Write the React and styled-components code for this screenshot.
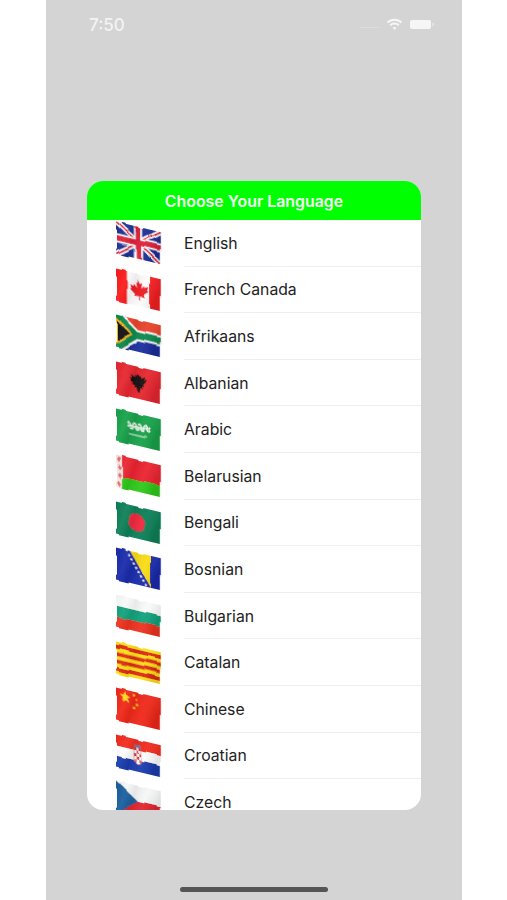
import styled, { createGlobalStyle } from "styled-components";

const GlobalStyle = createGlobalStyle`
  html, body {
    margin: 0;
    padding: 0;
    background: #ffffff;
  }
`;

const Page = styled.div`
  width: 507px;
  height: 900px;
  overflow: hidden;
  padding-left: 46px;
  box-sizing: border-box;
`;

const Screen = styled.div`
  width: 416px;
  height: 900px;
  background: #d4d4d4;
  display: flex;
  flex-direction: column;
  align-items: center;
`;

const StatusBar = styled.div`
  width: 100%;
  height: 181px;
  box-sizing: border-box;
  padding: 15px 28px 0 43px;
  display: flex;
  justify-content: space-between;
  align-items: flex-start;
`;

const Time = styled.span`
  font-family: Inter, "Liberation Sans", sans-serif;
  font-size: 17px;
  line-height: 20px;
  font-weight: 500;
  color: #f3f3f3;
`;

const StatusIcons = styled.div`
  display: flex;
  align-items: center;
  gap: 7px;
  height: 18px;
`;

const SignalTrace = styled.div`
  width: 19px;
  height: 1px;
  margin-top: 6px;
  background: #dcdcdc;
`;

const Battery = styled.div`
  width: 21px;
  height: 9px;
  margin-right: 3px;
  position: relative;
  background: #f6f6f6;
  border-radius: 2px;

  &::after {
    content: "";
    position: absolute;
    right: -3px;
    top: 3px;
    width: 2px;
    height: 3px;
    background: #e4e4e4;
  }
`;

const Card = styled.div`
  width: 334px;
  height: 629px;
  background: #ffffff;
  border-radius: 16px;
  overflow: hidden;
`;

const CardHeader = styled.div`
  height: 39px;
  box-sizing: border-box;
  padding-top: 1px;
  background: #00ff00;
  display: flex;
  align-items: center;
  justify-content: center;
  font-family: Inter, "Liberation Sans", sans-serif;
  font-size: 15.9px;
  font-weight: 600;
  color: #f4fff4;
`;

const LanguageList = styled.div`
  display: flex;
  flex-direction: column;
`;

const LanguageRow = styled.div`
  height: 46.6px;
  flex: none;
  display: flex;
  align-items: center;
  padding-left: 28px;
`;

const RowBody = styled.div`
  height: 100%;
  flex: 1;
  margin-left: 23px;
  padding-top: 1px;
  display: flex;
  align-items: center;
  box-sizing: border-box;
  border-bottom: 1px solid #eeeeee;
  font-family: Inter, "Liberation Sans", sans-serif;
  font-size: 15.75px;
  color: #222222;
`;

const FlagSvg = styled.svg`
  width: 47px;
  height: 44px;
  margin-right: -1px;
  flex: none;
`;

const HomeBar = styled.div`
  width: 148px;
  height: 5px;
  margin-top: auto;
  margin-bottom: 8px;
  border-radius: 3px;
  background: #555555;
`;

const star = (cx, cy, r, rot = -90) => {
  const pts = [];
  for (let i = 0; i < 10; i++) {
    const rad = i % 2 === 0 ? r : r * 0.42;
    const a = ((rot + i * 36) * Math.PI) / 180;
    pts.push(`${(cx + rad * Math.cos(a)).toFixed(2)},${(cy + rad * Math.sin(a)).toFixed(2)}`);
  }
  return pts.join(" ");
};

// every flag is drawn flat on a 45x32 field, Flag bends it
const Flag = ({ code, children }) => (
  <FlagSvg viewBox="0 0 47 44">
    <defs>
      <filter id={`wave-${code}`} x="-5%" y="-5%" width="110%" height="110%">
        <feTurbulence type="fractalNoise" baseFrequency="0.06 0.03" numOctaves="1" seed="7" />
        <feDisplacementMap in="SourceGraphic" scale="5" xChannelSelector="G" yChannelSelector="R" />
      </filter>
      <linearGradient id={`fold-${code}`} x1="0" x2="1" y1="0" y2="0.25">
        <stop offset="0" stopColor="#000" stopOpacity="0.03" />
        <stop offset="0.25" stopColor="#fff" stopOpacity="0.06" />
        <stop offset="0.45" stopColor="#000" stopOpacity="0.07" />
        <stop offset="0.7" stopColor="#fff" stopOpacity="0.05" />
        <stop offset="1" stopColor="#000" stopOpacity="0.1" />
      </linearGradient>
      <clipPath id={`field-${code}`}>
        <rect width="45" height="32" />
      </clipPath>
    </defs>
    <g filter={`url(#wave-${code})`} transform="translate(1 0.5) matrix(1 0.24 0 1 0 0)">
      <g clipPath={`url(#field-${code})`}>
        {children}
        <rect width="45" height="32" fill={`url(#fold-${code})`} />
      </g>
    </g>
  </FlagSvg>
);

const flags = {
  uk: (
    <>
      <rect width="45" height="32" fill="#1c2f96" />
      <path d="M0 0L45 32M45 0L0 32" stroke="#fff" strokeWidth="5" />
      <path d="M0 0L45 32M45 0L0 32" stroke="#e0203a" strokeWidth="1.8" />
      <path d="M22.5 0V32M0 16H45" stroke="#fff" strokeWidth="9" />
      <path d="M22.5 0V32M0 16H45" stroke="#e0203a" strokeWidth="5.5" />
    </>
  ),
  ca: (
    <>
      <rect width="45" height="32" fill="#fcfcfc" />
      <rect width="11" height="32" fill="#fb1c1c" />
      <rect x="34" width="11" height="32" fill="#f31f22" />
      <path
        fill="#ee1c25"
        transform="translate(22.5 16) scale(1.18) translate(-22.5 -16)"
        d="M22.5 7l2 3.6 2-.9-.8 4.5 2.5-2.4.6 1.6 2.8-.5-1 3.1 1.2.7-4.2 3.5.5 1.7-4.1-.5V25h-1v-3.6l-4.1.5.5-1.7-4.2-3.5 1.2-.7-1-3.1 2.8.5.6-1.6 2.5 2.4-.8-4.5 2 .9z"
      />
    </>
  ),
  za: (
    <>
      <rect width="45" height="16" fill="#e8432a" />
      <rect y="16" width="45" height="16" fill="#1a2e9e" />
      <path d="M0 0L20 16L0 32M20 16H45" fill="none" stroke="#fff" strokeWidth="11" />
      <path d="M0 0L20 16L0 32M20 16H45" fill="none" stroke="#0c8a4e" strokeWidth="7" />
      <path d="M0 4L15 16L0 28Z" fill="#111" stroke="#f4b81e" strokeWidth="2" />
    </>
  ),
  al: (
    <>
      <rect width="45" height="32" fill="#e6262f" />
      <path
        fill="#161010"
        transform="translate(23 16) scale(0.8) translate(-22 -16)"
        d="M22 5l2 3 2-1v3l5-3-1 5 3-1-2 5-3 1 2 2-4 1 1 3-3-1-1 5-1 3-2-3-1-5-3 1 1-3-4-1 2-2-3-1-2-5 3 1-1-5 5 3V7l2 1z"
      />
    </>
  ),
  sa: (
    <>
      <rect width="45" height="32" fill="#18a24a" />
      <path
        d="M11 12q1.5-4 3 0t3 0 3 0 3 0 3 0 3 0 3 0 3 0M11 15q1.5-3 3 0t3 0 3 0 3 0 3 0 3 0 3 0 3 0"
        fill="none"
        stroke="#e9f6ec"
        strokeWidth="1.7"
      />
      <path d="M13 22H32" stroke="#e9f6ec" strokeWidth="1.1" />
    </>
  ),
  by: (
    <>
      <rect width="45" height="21" fill="#ea2330" />
      <rect y="21" width="45" height="11" fill="#2fc91a" />
      <rect width="6" height="32" fill="#f7e6e2" />
      <path d="M3 1l2 3-2 3-2-3zM3 9l2 3-2 3-2-3zM3 17l2 3-2 3-2-3zM3 25l2 3-2 3-2-3z" fill="#e36a6a" />
    </>
  ),
  bd: (
    <>
      <rect width="45" height="32" fill="#0d8058" />
      <circle cx="21" cy="16" r="9" fill="#f0283e" />
    </>
  ),
  ba: (
    <>
      <rect width="45" height="32" fill="#1a2bab" />
      <path d="M14 0H35V32Z" fill="#fadc14" />
      <path stroke="#f2f4ff" strokeWidth="2" strokeDasharray="2 2.4" d="M10 0L31 32" />
    </>
  ),
  bg: (
    <>
      <rect width="45" height="11" fill="#f8faf9" />
      <rect y="11" width="45" height="11" fill="#12a27c" />
      <rect y="22" width="45" height="10" fill="#ee3220" />
    </>
  ),
  ct: (
    <>
      <rect width="45" height="32" fill="#fde015" />
      <path d="M0 5H45M0 12.3H45M0 19.6H45M0 27H45" stroke="#df2a18" strokeWidth="3.8" />
    </>
  ),
  cn: (
    <>
      <rect width="45" height="32" fill="#f0281a" />
      <polygon points={star(9, 8, 5.5)} fill="#fcd91c" />
      <polygon points={star(18, 3.5, 1.9, -60)} fill="#fcd91c" />
      <polygon points={star(21, 7.5, 1.9, -30)} fill="#fcd91c" />
      <polygon points={star(21, 12.5, 1.9, 0)} fill="#fcd91c" />
      <polygon points={star(18, 16, 1.9, 20)} fill="#fcd91c" />
    </>
  ),
  hr: (
    <>
      <rect width="45" height="11" fill="#f22a1e" />
      <rect y="11" width="45" height="10" fill="#fcfcfc" />
      <rect y="21" width="45" height="11" fill="#1a3cae" />
      <path d="M18 8h8v12q0 4-4 5-4-1-4-5z" fill="#fff" stroke="#c9424a" strokeWidth="0.5" />
      <path
        d="M18 8h2.7v3H18zM23.3 8H26v3h-2.7zM20.7 11h2.6v3h-2.6zM18 14h2.7v3H18zM23.3 14H26v3h-2.7zM20.7 17h2.6v3h-2.6zM19 20h1.7v3H19zM23.3 20H25v3h-1.7z"
        fill="#d8313c"
      />
      <path d="M18 8l1-3 3 1 3-1 1 3z" fill="#5f7fa8" />
    </>
  ),
  cz: (
    <>
      <rect width="45" height="16" fill="#f5f7f7" />
      <rect y="16" width="45" height="16" fill="#e0262f" />
      <path d="M0 0L22 16L0 32Z" fill="#1a5f9e" />
    </>
  ),
};

const languages = [
  { code: "uk", name: "English" },
  { code: "ca", name: "French Canada" },
  { code: "za", name: "Afrikaans" },
  { code: "al", name: "Albanian" },
  { code: "sa", name: "Arabic" },
  { code: "by", name: "Belarusian" },
  { code: "bd", name: "Bengali" },
  { code: "ba", name: "Bosnian" },
  { code: "bg", name: "Bulgarian" },
  { code: "ct", name: "Catalan" },
  { code: "cn", name: "Chinese" },
  { code: "hr", name: "Croatian" },
  { code: "cz", name: "Czech" },
];

const App = () => (
  <>
    <GlobalStyle />
    <Page>
      <Screen>
        <StatusBar>
          <Time>7:50</Time>
          <StatusIcons>
            <SignalTrace />
            <svg width="17" height="13" viewBox="0 0 17 13">
              <path d="M1.5 4.5a10 10 0 0 1 14 0" fill="none" stroke="#f6f6f6" strokeWidth="2" />
              <path d="M4.2 7.3a6.2 6.2 0 0 1 8.6 0" fill="none" stroke="#f6f6f6" strokeWidth="2" />
              <path d="M6.5 9.8a3 3 0 0 1 4 0L8.5 12z" fill="#f6f6f6" />
            </svg>
            <Battery />
          </StatusIcons>
        </StatusBar>
        <Card>
          <CardHeader>Choose Your Language</CardHeader>
          <LanguageList>
            {languages.map((lang) => (
              <LanguageRow key={lang.code}>
                <Flag code={lang.code}>{flags[lang.code]}</Flag>
                <RowBody>{lang.name}</RowBody>
              </LanguageRow>
            ))}
          </LanguageList>
        </Card>
        <HomeBar />
      </Screen>
    </Page>
  </>
);

export default App;
